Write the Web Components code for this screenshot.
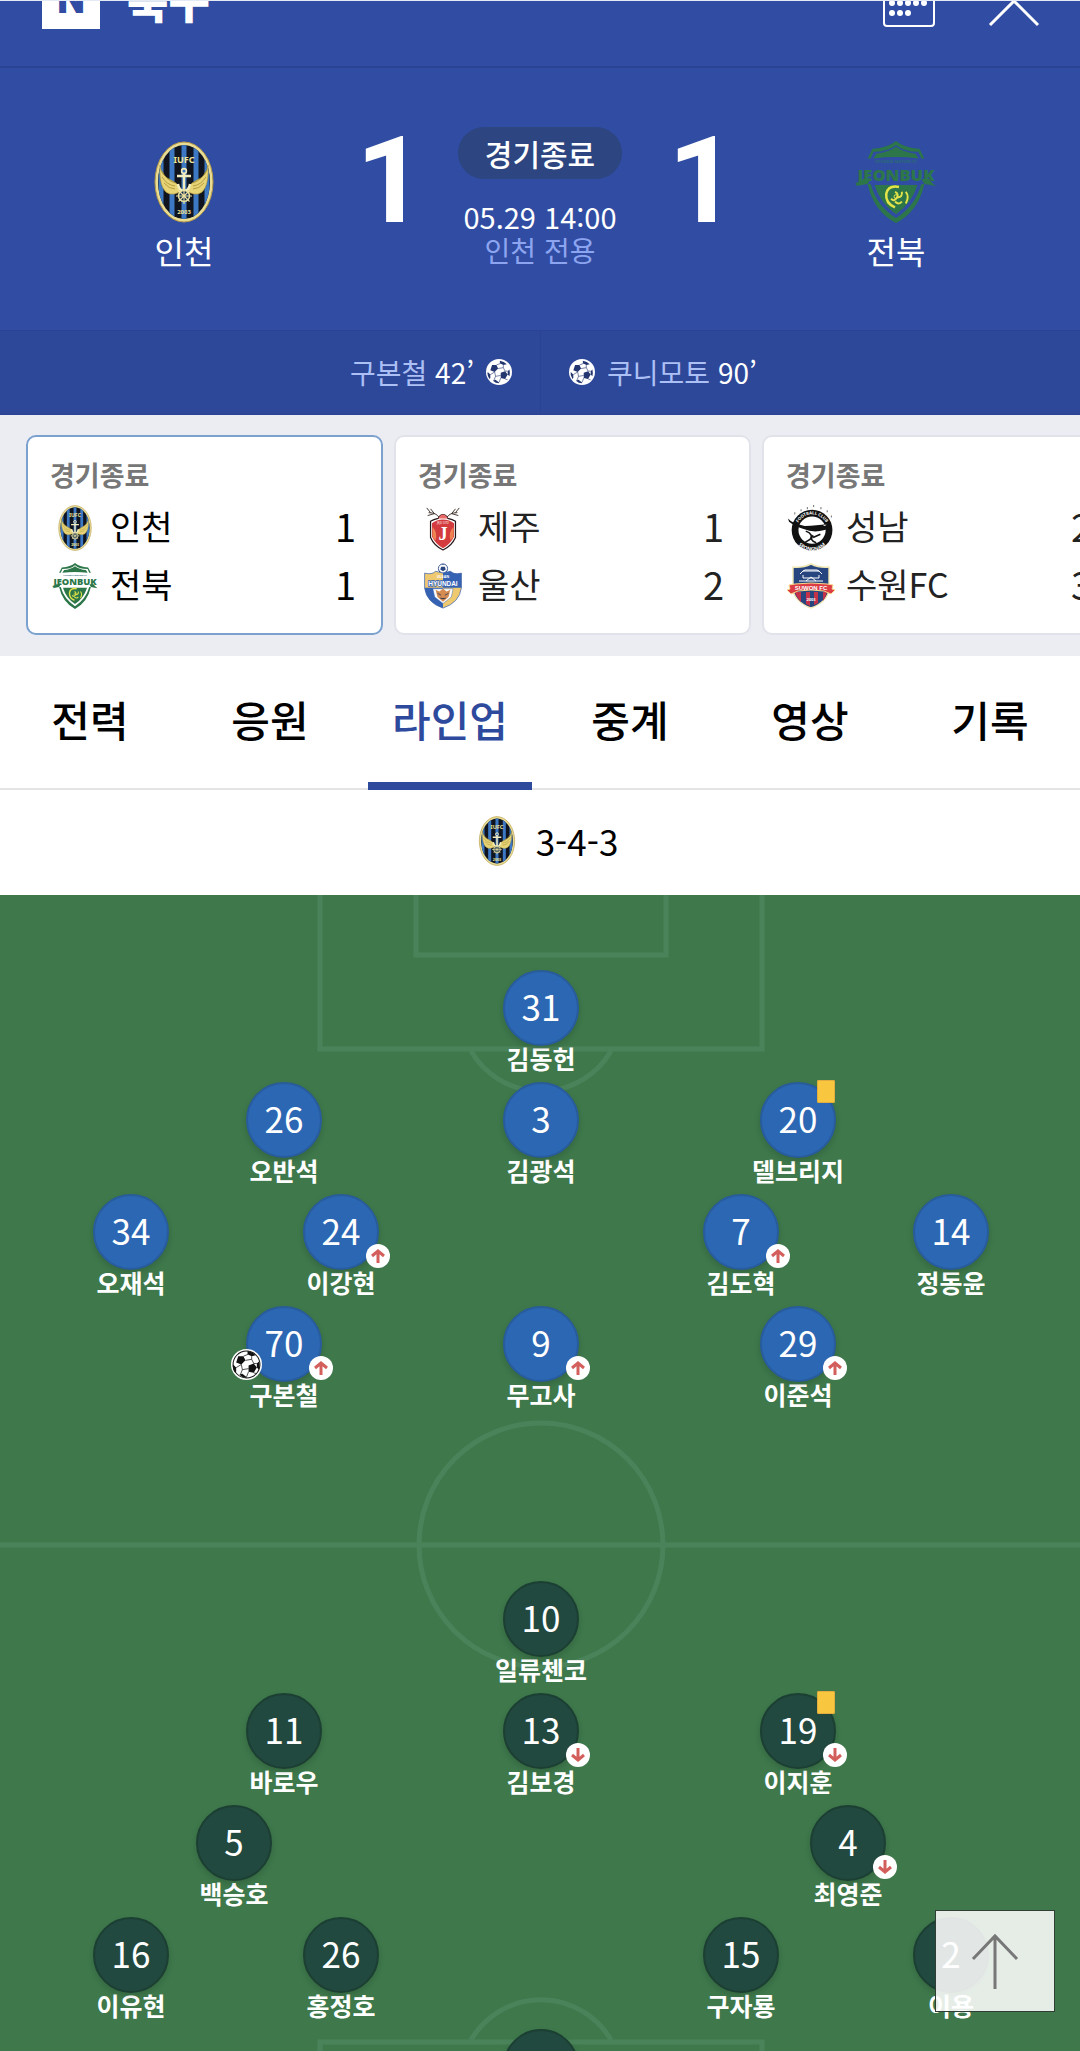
<!DOCTYPE html>
<html lang="ko">
<head>
<meta charset="utf-8">
<meta name="viewport" content="width=device-width, initial-scale=1">
<title>인천 1 : 1 전북</title>
<style>
    :root {
        --brand: #304da3;
        --brand-dark: #2e4899;
        --line: #2a4394;
        --pale: #acc0f5;
    }
    html, body {
        height: 100%;
        margin: 0;
    }
    body {
        font-family: 'Noto Sans CJK KR', 'Noto Sans', sans-serif;
        background: #fff;
        color: #000;
        overflow: hidden;
    }
</style>
</head>
<body>

<sports-header></sports-header>

<score-board>
    <board-team slot="home" team="incheon">인천</board-team>
    <span slot="home-score">1</span>
    <span slot="status">경기종료</span>
    <span slot="time">05.29 14:00</span>
    <span slot="place">인천 전용</span>
    <span slot="away-score">1</span>
    <board-team slot="away" team="jeonbuk">전북</board-team>
    <goal-entry slot="home-goals" side="home" minute="42’">구본철</goal-entry>
    <goal-entry slot="away-goals" side="away" minute="90’">쿠니모토</goal-entry>
</score-board>

<match-strip>
    <match-card selected status="경기종료">
        <match-row team="incheon" score="1">인천</match-row>
        <match-row team="jeonbuk" score="1">전북</match-row>
    </match-card>
    <match-card status="경기종료">
        <match-row team="jeju" score="1">제주</match-row>
        <match-row team="ulsan" score="2">울산</match-row>
    </match-card>
    <match-card status="경기종료">
        <match-row team="seongnam" score="2">성남</match-row>
        <match-row team="suwonfc" score="3">수원FC</match-row>
    </match-card>
</match-strip>

<tab-bar>
    <tab-item>전력</tab-item>
    <tab-item>응원</tab-item>
    <tab-item selected>라인업</tab-item>
    <tab-item>중계</tab-item>
    <tab-item>영상</tab-item>
    <tab-item>기록</tab-item>
</tab-bar>

<formation-title team="incheon">3-4-3</formation-title>

<pitch-field>
    <line-up slot="home">
        <line-row>
            <line-player number="31">김동헌</line-player>
        </line-row>
        <line-row spread="three">
            <line-player number="26">오반석</line-player>
            <line-player number="3">김광석</line-player>
            <line-player number="20" card>델브리지</line-player>
        </line-row>
        <line-row spread="four">
            <line-player number="34">오재석</line-player>
            <line-player number="24" sub="up">이강현</line-player>
            <line-player number="7" sub="up">김도혁</line-player>
            <line-player number="14">정동윤</line-player>
        </line-row>
        <line-row spread="three">
            <line-player number="70" sub="up" goal>구본철</line-player>
            <line-player number="9" sub="up">무고사</line-player>
            <line-player number="29" sub="up">이준석</line-player>
        </line-row>
    </line-up>
    <line-up slot="away" class="away">
        <line-row>
            <line-player number="10">일류첸코</line-player>
        </line-row>
        <line-row spread="three">
            <line-player number="11">바로우</line-player>
            <line-player number="13" sub="down">김보경</line-player>
            <line-player number="19" sub="down" card>이지훈</line-player>
        </line-row>
        <line-row spread="two">
            <line-player number="5">백승호</line-player>
            <line-player number="4" sub="down">최영준</line-player>
        </line-row>
        <line-row spread="four">
            <line-player number="16">이유현</line-player>
            <line-player number="26">홍정호</line-player>
            <line-player number="15">구자룡</line-player>
            <line-player number="2">이용</line-player>
        </line-row>
        <line-row>
            <line-player></line-player>
        </line-row>
    </line-up>
</pitch-field>

<top-button></top-button>

<script>
const crests = {
    incheon: /*html*/`
        <svg viewBox="0 0 60 82">
            <defs><clipPath id="c"><ellipse cx="30" cy="41" rx="26" ry="37"/></clipPath></defs>
            <ellipse cx="30" cy="41" rx="29" ry="40" fill="#e9dc95" stroke="#b79a44" stroke-width="1"/>
            <g clip-path="url(#c)">
                <path fill="#10141f" d="M0 0h60v82H0z"/>
                <path stroke="#3c78c3" stroke-width="5" d="M7 0v82M18 0v82M30 0v82M42 0v82M53 0v82"/>
            </g>
            <text x="30" y="22" font-size="9" font-weight="700" text-anchor="middle" fill="#efe49b">IUFC</text>
            <path fill="#e6d476" stroke="#a98e35" stroke-width=".6" d="M6 24q1 11 11 15 6 3 9 7v5q-12 6-17-4-4-8-3-23zM54 24q-1 11-11 15-6 3-9 7v5q12 6 17-4 4-8 3-23z"/>
            <path fill="none" stroke="#a98e35" stroke-width=".8" d="M8 30q4 9 13 12M8 36q5 8 13 9M10 42q5 6 11 6M52 30q-4 9-13 12M52 36q-5 8-13 9M50 42q-5 6-11 6"/>
            <path fill="none" stroke="#f4edbe" stroke-width="2.4" d="M30 33v17M23 35h14M24 43q1 7 6 7t6-7"/>
            <circle cx="30" cy="30" r="2.4" fill="none" stroke="#f4edbe" stroke-width="1.6"/>
            <circle cx="30" cy="55" r="5.500" fill="#17324f" stroke="#e9dfa0" stroke-width="1.500"/>
            <path stroke="#e9dfa0" stroke-width="1.1" d="M30 47v16M22 55h16M24.500 49.500l11 11M35.500 49.500l-11 11"/>
            <text x="30" y="73" font-size="6" font-weight="700" text-anchor="middle" fill="#efe49b">2003</text>
        </svg>`,
    jeonbuk: /*html*/`
        <svg viewBox="0 0 82 84">
            <g fill="#2c7649">
                <path d="M41 0q8 7 24 8l5 10h-3l-3-7q-15 0-23-7-8 7-23 7l-3 7h-3l5-10q16-1 24-8z"/>
                <path d="M41 6q8 6 20 7l3 5q-23-3-46 0l3-5q12-1 20-7z"/>
                <path d="M12 44h3q6 22 26 35 20-13 26-35h3q-6 28-29 40-23-12-29-40z"/>
                <path d="M19 45h44q-6 19-22 30-16-11-22-30z"/>
                <path d="M0 46q5-3 7-7h8l-3 5zM82 46q-5-3-7-7h-8l3 5z"/>
            </g>
            <text x="41" y="23" font-size="4" font-weight="700" text-anchor="middle" fill="#2c6a78">HYUNDAI MOTORS FC</text>
            <text x="41" y="41" font-size="17" font-weight="800" text-anchor="middle" fill="#2c7649" font-family="Open Sans">JEONBUK</text>
            <g fill="none" stroke="#e3e34a">
                <path stroke-width="2.600" d="M44 47q-11-2-13 7-1 10 9 14"/>
                <path stroke-width="2" d="M51 52q4 5 0 12M40 52q4 2 2 6-3 5-6 1M42 58q6 0 5-6M40 62q4 4 7 0"/>
                <circle cx="41" cy="57" r="2"/>
            </g>
        </svg>`,
    jeju: /*html*/`
        <svg viewBox="0 0 34 48">
            <path fill="none" stroke="#40332d" stroke-width="1" d="M13 13Q10 8 2 8M17 12M8 9L4 4M8 9L1 11M4 8L0 3M21 13q3-5 11-5M26 9l4-5M26 9l7 2M30 8l4-5"/>
            <path fill="#fff" stroke="#25181a" stroke-width="1.300" d="M17 10q3 0 5 4 5 1 8 3v17q-4 9-13 13Q8 43 4 34V17q3-2 8-3 2-4 5-4z"/>
            <path fill="#d43b3e" d="M5.500 19Q10 15 17 15t11.500 4v14q-4 8-11.500 12Q9.500 41 5.500 33z"/>
            <path fill="#ef8453" d="M6 23q6 6 3 14-3-3-3-5zM28 23q-6 6-3 14 3-3 3-5z"/>
            <path fill="#e96969" d="M12 14q2-4 5-4t5 4z"/>
            <text x="17" y="20" font-size="3" text-anchor="middle" fill="#fff">JEJU UTD</text>
            <text x="17" y="37" font-size="19" font-weight="700" text-anchor="middle" fill="#fff" font-family="Liberation Serif">J</text>
        </svg>`,
    ulsan: /*html*/`
        <svg viewBox="0 0 42 50">
            <circle cx="21" cy="6" r="5" fill="#fff" stroke="#335295"/>
            <path fill="#29477e" d="M19 4h4l1 3-3 2-3-2zM16 8l2 1v2zM26 8l-2 1v2zM21 1h2l-2 1-2-1z"/>
            <path fill="#efc96f" stroke="#3f66b5" stroke-width=".8" d="M1 11q8 2 12-2l8 2 8-2q4 4 12 2v16q-2 16-20 22Q3 43 1 27z"/>
            <path fill="#3562b3" d="M21 11l8-2q4 4 12 2v16H21zM1 27h20v22Q3 43 1 27z"/>
            <path fill="#fff" stroke="#3562b3" stroke-width=".5" d="M10 28h22l-2 9-9 7-9-7z"/>
            <path fill="#d68b50" d="M13 29l4 2 4-3 4 3 4-2-2 8-6 5-6-5z"/>
            <path stroke="#384767" d="M15 33l4 2M27 33l-4 2M18 38l3 1 3-1"/>
            <text x="21" y="16" font-size="4" font-weight="700" text-anchor="middle" fill="#fff">ULSAN</text>
            <text x="21" y="25" font-size="7" font-weight="700" text-anchor="middle" fill="#fff" stroke="#3562b3" stroke-width="1.600" paint-order="stroke" font-family="Liberation Sans">HYUNDAI</text>
        </svg>`,
    seongnam: /*html*/`
        <svg viewBox="0 0 44 44">
            <circle cx="23" cy="24" r="19.500" fill="#111"/>
            <circle cx="23" cy="24" r="13" fill="#fff"/>
            <path id="a" fill="none" d="M8 24a15 15 0 0 1 30 0"/>
            <path id="b" fill="none" d="M5 26a18 18 0 0 0 36 0"/>
            <g font-size="4" font-weight="700" fill="#fff">
                <text><textPath href="#a" startOffset="50%" text-anchor="middle">FOOTBALL CLUB</textPath></text>
                <text font-size="5"><textPath href="#b" startOffset="50%" text-anchor="middle">SEONGNAM</textPath></text>
            </g>
            <path fill="#111" d="M0 13q4 5 16 7 12 0 21-2 2-1 3 1 0 4-5 5-11 3-20-1Q6 20 1 16z"/>
            <path fill="#fff" d="M16 24q8 3 16 1-7 4-10 3zM33 19l4 0-2 1z"/>
            <path fill="none" stroke="#111" stroke-width="1.500" d="M17 25q8 3 4 8l-5 3M24 29q-4 5 3 7M31 28l-7 3"/>
            <path fill="#777" d="M6 7h1v2H6zM12 4h1v2h-1zM18 2h1v2h-1zM24 0h1v2h-1zM31 2h1v2h-1zM37 5h1v2h-1zM41 10h1v2h-1z"/>
        </svg>`,
    suwonfc: /*html*/`
        <svg viewBox="0 0 50 46">
            <path fill="#27457f" stroke="#efe7b4" stroke-width="1.400" d="M25 1q8 4 18 3v23q-2 12-18 18Q9 39 7 27V4q10 1 18-3z"/>
            <path fill="#c33249" d="M9 29h6v10q-5-5-6-10zM20 29h4v14l-4-2zM28 29h4v11l-4 2zM37 29h4q-1 5-4 9z"/>
            <path fill="none" stroke="#fff" stroke-width="1" d="M14 11l3-3h16l3 3M17 12v3h16v-3M13 18h24M17 8l2-1h12l2 1M20 18l5-4 5 4"/>
            <path fill="#dc3c43" stroke="#f6d98d" stroke-width="1" d="M3 22l6-1q16-2 32 0l6 1-1 4 3 1-4 4-7-3q-13-2-26 0l-7 3-4-4 3-1z"/>
            <text x="25" y="27" font-size="6" font-weight="700" text-anchor="middle" fill="#fff" font-family="Liberation Sans">SUWON FC</text>
            <text x="25" y="38" font-size="4" font-weight="700" text-anchor="middle" fill="#fff">2003</text>
        </svg>`
}

const ball = /*html*/`
    <svg viewBox="0 0 30 30">
        <circle cx="15" cy="15" r="15" fill="#fff"/>
        <circle cx="15" cy="15" r="13" fill="#fff" stroke="var(--seam, #111)" stroke-width="var(--rim, 1)"/>
        <path fill="var(--seam, #111)" d="M7 7l5 0 2 4-4 4-5-2zM17 16l5-2 3 4-3 5-5-1zM16 2q5 1 8 4l-4 1-4-2zM27 12q1 4 0 8l-2-2v-4zM2 15l3 3v4l-1 1q-3-4-2-8zM8 25l3-1 4 3v1q-4 0-7-3z"/>
        <path fill="none" stroke="var(--seam, #111)" stroke-width=".7" d="M12 7l5-2M14 11l6-1 2 4M20 10V7M10 15l1 5 6-1M11 20l-2 5M5 18l5-3M17 22l-2 5M22 14l3 0M22 23l3 1"/>
    </svg>`

class Component extends HTMLElement {

    get css () { return '' }
    get html () { return '<slot></slot>' }

    connectedCallback () {
        if (this.shadowRoot) return
        this.attachShadow({mode: 'open'})
        const template = document.createElement('template')
        template.innerHTML = `<style>${this.css}</style>${this.html}`
        this.shadowRoot.appendChild(template.content)
    }

    attr (name) {
        return this.getAttribute(name) ?? ''
    }

}

customElements.define('team-crest', class extends Component {
    get css () {
        return /*css*/`
            :host { display: flex; align-items: center; justify-content: center; }
            svg { display: block; width: 100%; height: 100%; font-family: 'Noto Sans', sans-serif; }
        `
    }
    get html () { return crests[this.attr('team')] }
})

customElements.define('sports-header', class extends Component {
    get css () {
        return /*css*/`
            :host { display: block; background: var(--brand); border-bottom: 2px solid var(--line); }
            header {
                box-sizing: border-box;
                height: 66px;
                padding: 0 40px 37px 42px;
                border-top: 1px solid #e4eaf5;
                display: flex;
                align-items: flex-end;
                overflow: hidden;
            }
            a { display: flex; align-items: flex-end; gap: 27px; color: #fff; text-decoration: none; margin-right: auto; }
            .n {
                width: 58px;
                height: 58px;
                background: #fff;
                color: var(--brand);
                font: 900 40px/58px Roboto, sans-serif;
                text-align: center;
            }
            .name { font-size: 45px; font-weight: 900; line-height: 58px; }
            button { border: 0; padding: 0; background: none; display: block; height: 54px; }
            button + button { margin-left: 52px; }
            svg { display: block; fill: none; stroke: #fff; stroke-width: 2; }
        `
    }
    get html () {
        return /*html*/`
            <header>
                <a href="#"><span class="n">N</span><span class="name">축구</span></a>
                <button aria-label="일정">
                    <svg width="54" height="54" viewBox="0 0 54 54">
                        <rect x="2" y="6" width="50" height="45" rx="3"/>
                        <path stroke-width="6" stroke-linecap="round" d="M10 28h0M18 28h0M26 28h0M34 28h0M42 28h0M10 38h0M18 38h0M26 38h0"/>
                    </svg>
                </button>
                <button aria-label="닫기">
                    <svg width="52" height="54" viewBox="0 0 52 54"><path stroke-width="3" d="M2 2l48 48M50 2L2 50"/></svg>
                </button>
            </header>`
    }
})

customElements.define('score-board', class extends Component {
    get css () {
        return /*css*/`
            :host { display: block; background: var(--brand); color: #fff; text-align: center; }
            .board {
                display: grid;
                grid-template-columns: 1fr 70px 242px 70px 1fr;
                padding: 59px 19px 60px;
            }
            .score { padding-left: 7px; font: 700 120px/108px Roboto, sans-serif; }
            .info { display: flex; flex-direction: column; align-items: center; }
            .status {
                background: #2d4580;
                border-radius: 26px;
                padding: 0 27px;
                margin-bottom: 20px;
                font-size: 30px;
                font-weight: 500;
                line-height: 52px;
            }
            .time { font-size: 29px; line-height: 34px; }
            .place { font-size: 28px; line-height: 34px; color: #8da4f0; }
            .goals {
                display: grid;
                grid-template-columns: 1fr 1fr;
                background: var(--brand-dark);
                border-top: 1px solid var(--line);
                border-bottom: 1px solid var(--line);
            }
            .goals div { padding: 20px 28px 21px; }
            .goals div + div { border-left: 1px solid var(--line); }
        `
    }
    get html () {
        return /*html*/`
            <section class="board">
                <slot name="home"></slot>
                <div class="score"><slot name="home-score"></slot></div>
                <div class="info">
                    <div class="status"><slot name="status"></slot></div>
                    <div class="time"><slot name="time"></slot></div>
                    <div class="place"><slot name="place"></slot></div>
                </div>
                <div class="score"><slot name="away-score"></slot></div>
                <slot name="away"></slot>
            </section>
            <section class="goals">
                <div><slot name="home-goals"></slot></div>
                <div><slot name="away-goals"></slot></div>
            </section>`
    }
})

customElements.define('board-team', class extends Component {
    get css () {
        return /*css*/`
            :host { display: flex; flex-direction: column; align-items: center; padding-top: 14px; font-size: 32px; line-height: 40px; }
            team-crest { width: 82px; height: 82px; margin-bottom: 7px; }
        `
    }
    get html () { return `<team-crest team="${this.attr('team')}"></team-crest><slot></slot>` }
})

customElements.define('goal-entry', class extends Component {
    get css () {
        return /*css*/`
            :host { display: flex; align-items: center; gap: 12px; font-size: 28px; line-height: 42px; color: var(--pale); --seam: #24366f; --rim: 0; }
            :host([side=home]) { flex-direction: row-reverse; }
            b { color: #fff; font-weight: 400; }
            svg { width: 26px; height: 26px; }
        `
    }
    get html () { return `${ball}<span><slot></slot> <b>${this.attr('minute')}</b></span>` }
})

customElements.define('match-strip', class extends Component {
    get css () {
        return /*css*/`
            :host { display: flex; gap: 11px; padding: 20px 0 21px 26px; background: #ecedf3; overflow: hidden; }
        `
    }
})

customElements.define('match-card', class extends Component {
    get css () {
        return /*css*/`
            :host { flex: none; width: 357px; }
            a {
                display: block;
                box-sizing: border-box;
                padding: 17px 25px 21px 22px;
                border: 2px solid #e2e3ea;
                border-radius: 10px;
                background: #fff;
                color: #222;
                text-decoration: none;
            }
            :host([selected]) a { border-color: #7ba1cf; color: #000; }
            .status { color: #777; font-size: 27px; font-weight: 700; line-height: 42px; }
        `
    }
    get html () { return `<a href="#"><div class="status">${this.attr('status')}</div><slot></slot></a>` }
})

customElements.define('match-row', class extends Component {
    get css () {
        return /*css*/`
            :host { display: flex; align-items: center; gap: 10px; height: 58px; font-size: 34px; }
            team-crest { width: 50px; height: 46px; margin-top: 5px; }
            b { margin-left: auto; font-size: 38px; font-weight: 400; }
        `
    }
    get html () { return `<team-crest team="${this.attr('team')}"></team-crest><slot></slot><b>${this.attr('score')}</b>` }
})

customElements.define('tab-bar', class extends Component {
    get css () {
        return /*css*/`
            :host { display: flex; box-shadow: inset 0 -2px #e3e4e6; }
        `
    }
})

customElements.define('tab-item', class extends Component {
    get css () {
        return /*css*/`
            :host { flex: 1; text-align: center; padding: 0 8px; }
            a {
                display: block;
                color: #000;
                font-size: 42px;
                font-weight: 500;
                line-height: 126px;
                text-decoration: none;
                border-bottom: 8px solid transparent;
            }
            :host([selected]) a { color: #2e4a9d; border-color: #2e4a9d; }
        `
    }
    get html () { return '<a href="#"><slot></slot></a>' }
})

customElements.define('formation-title', class extends Component {
    get css () {
        return /*css*/`
            :host { display: flex; align-items: center; justify-content: center; gap: 20px; padding: 0 0 4px 16px; font-size: 35px; line-height: 101px; }
            team-crest { width: 38px; height: 50px; }
        `
    }
    get html () { return `<team-crest team="${this.attr('team')}"></team-crest><span><slot></slot></span>` }
})

customElements.define('pitch-field', class extends Component {
    get css () {
        return /*css*/`
            :host { display: grid; background: #3e784b; color: #fff; }
            svg, .teams { grid-area: 1 / 1; }
            svg { width: 100%; height: 1301px; fill: none; stroke: #4a835a; stroke-width: 5; }
            .teams { padding: 75px 0 0 2px; }
            ::slotted([slot=away]) { margin-top: 163px; }
        `
    }
    get html () {
        return /*html*/`
            <svg viewBox="0 0 1080 1301">
                <path d="M0 650h1080"/>
                <circle cx="541" cy="650" r="122"/>
                <path d="M320-5v159h442V-5M416-5v65h250V-5M471 156a81 81 0 0 0 140 0"/>
                <path d="M320 1306v-159h442v159M416 1306v-65h250v65M471 1145a81 81 0 0 1 140 0"/>
            </svg>
            <div class="teams"><slot name="home"></slot><slot name="away"></slot></div>`
    }
})

customElements.define('line-up', class extends Component {
    get css () {
        return /*css*/`
            :host { display: block; --kit: #2c67b4; --kit-edge: #285c9c; }
            :host(.away) { --kit: #22493f; --kit-edge: #1c3f33; }
        `
    }
})

// one row of players, spread over the width of the pitch
customElements.define('line-row', class extends Component {
    get css () {
        return /*css*/`
            :host { display: flex; justify-content: center; box-sizing: border-box; height: 112px; }
            :host([spread]) { justify-content: space-between; }
            :host([spread=two]) { padding: 0 164px; }
            :host([spread=three]) { padding: 0 214px; }
            :host([spread=four]) { padding: 0 61px; gap: 74px; }
            :host([spread=four]) ::slotted(:nth-child(3)) { margin-left: auto; }
        `
    }
})

customElements.define('line-player', class extends Component {
    get css () {
        return /*css*/`
            :host { display: flex; flex-direction: column; align-items: center; width: 136px; font-size: 25px; font-weight: 700; line-height: 24px; }
            .shirt {
                position: relative;
                box-sizing: border-box;
                width: 76px;
                height: 76px;
                border: 2px solid var(--kit-edge);
                border-radius: 50%;
                background: var(--kit);
                box-shadow: 0 3px 6px rgba(0, 0, 0, .15);
                font-size: 35px;
                font-weight: 400;
                line-height: 68px;
                text-align: center;
            }
            .sub, .goal, .card { position: absolute; display: block; }
            .sub { left: 61px; top: 48px; width: 24px; height: 24px; }
            .goal { left: -17px; top: 41px; width: 31px; height: 31px; }
            .goal svg { display: block; }
            .card { left: 55px; top: -4px; width: 18px; height: 23px; border-radius: 2px; background: #f8c63f; box-shadow: inset 0 0 0 1px #e0ad3e; }
            .down { transform: rotate(180deg); }
        `
    }
    get html () {
        const sub = this.attr('sub')
        return /*html*/`
            <div class="shirt">
                ${this.attr('number')}
                ${this.hasAttribute('card') ? '<span class="card"></span>' : ''}
                ${this.hasAttribute('goal') ? `<span class="goal">${ball}</span>` : ''}
                ${sub ? `<svg class="sub ${sub}" viewBox="0 0 24 24">
                    <circle cx="12" cy="12" r="12" fill="#fff"/>
                    <path fill="none" stroke="#d35f5c" stroke-width="3" d="M12 19V7M6 12l6-5 6 5"/>
                </svg>` : ''}
            </div>
            <slot></slot>`
    }
})

customElements.define('top-button', class extends Component {
    get css () {
        return /*css*/`
            :host { position: fixed; right: 25px; bottom: 39px; }
            button {
                display: flex;
                align-items: center;
                justify-content: center;
                width: 120px;
                height: 102px;
                padding: 0;
                border: 1px solid #2f3f35;
                background: rgba(255, 255, 255, .87);
            }
        `
    }
    get html () {
        return /*html*/`
            <button aria-label="맨 위로">
                <svg width="48" height="56" viewBox="0 0 48 56" fill="none" stroke="#777" stroke-width="3"><path d="M24 56V3M2 26L24 3l22 23"/></svg>
            </button>`
    }
})
</script>
</body>
</html>
